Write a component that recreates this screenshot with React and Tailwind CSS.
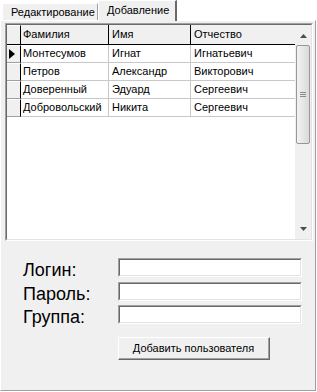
export default function App() {
  const rows = [
    ["Монтесумов", "Игнат", "Игнатьевич"],
    ["Петров", "Александр", "Викторович"],
    ["Доверенный", "Эдуард", "Сергеевич"],
    ["Добровольский", "Никита", "Сергеевич"],
  ];
  const fields = ["Логин:", "Пароль:", "Группа:"];
  return (
    <div className="w-[317px] h-[392px] bg-white font-['Liberation_Sans',Arial,sans-serif] text-[11px] text-black overflow-hidden">
      {/* tabs */}
      <div className="relative z-10 h-[20px] flex items-end pl-[2px]">
        <div className="h-[17px] w-[96px] bg-[#f0f0f0] border-t border-l border-white border-r border-r-[#a0a0a0] pl-[8px] leading-[16px] whitespace-nowrap">
          Редактирование
        </div>
        <div className="h-[21px] w-[79px] -mb-[1px] bg-[#f0f0f0] border-t border-l border-white border-r-2 border-r-[#696969] pl-[8px] leading-[19px] whitespace-nowrap">
          Добавление
        </div>
      </div>
      {/* panel */}
      <div className="h-[371px] w-[316px] bg-[#f0f0f0] border-t border-l border-white border-r border-b border-r-[#a0a0a0] border-b-[#a0a0a0] flex flex-col">
        {/* grid */}
        <div className="ml-[4px] mt-[2px] w-[308px] h-[218px] border-t border-l border-[#a0a0a0] border-r border-b border-r-white border-b-white">
          <div className="h-full w-full border-t border-l border-[#696969] border-r border-b border-r-[#e3e3e3] border-b-[#e3e3e3] bg-white flex">
            <div className="w-[288px] flex flex-col">
              {/* header */}
              <div className="flex h-[20px] border-b border-black">
                <div className="w-[14px] bg-[#f0f0f0] border-r border-black border-t border-t-white"></div>
                <div className="w-[88px] bg-[#f0f0f0] border-r border-black pl-[2px] leading-[19px]">Фамилия</div>
                <div className="w-[82px] bg-[#f0f0f0] border-r border-black pl-[3px] leading-[19px]">Имя</div>
                <div className="w-[104px] bg-[#f0f0f0] pl-[3px] leading-[19px]">Отчество</div>
              </div>
              {rows.map((r, i) => (
                <div key={i} className="flex h-[18px]">
                  <div className="w-[14px] bg-[#f0f0f0] border-r border-black border-b border-b-[#a0a0a0] border-t border-t-white flex items-center pl-[2px]">
                    {i === 0 && (
                      <svg width="6" height="10" viewBox="0 0 6 10">
                        <path d="M0 0 L6 5 L0 10 Z" fill="#000" />
                      </svg>
                    )}
                  </div>
                  <div className="w-[88px] border-r border-b border-[#c8c8c8] pl-[2px] leading-[17px] whitespace-nowrap">{r[0]}</div>
                  <div className="w-[82px] border-r border-b border-[#c8c8c8] pl-[3px] leading-[17px] whitespace-nowrap">{r[1]}</div>
                  <div className="w-[104px] border-b border-[#c8c8c8] pl-[3px] leading-[17px] whitespace-nowrap">{r[2]}</div>
                </div>
              ))}
            </div>
            {/* scrollbar */}
            <div className="w-[17px] bg-[#f0f0f0] flex flex-col">
              <div className="h-[20px] flex items-center justify-center pt-[2px]">
                <svg width="7" height="4" viewBox="0 0 7 4">
                  <path d="M3.5 0 L7 4 L0 4 Z" fill="#4d4d4d" />
                </svg>
              </div>
              <div className="mx-[1px] h-[99px] rounded-[2px] border border-[#979797] bg-gradient-to-r from-[#f3f3f3] to-[#dadada] flex items-center justify-center">
                <div className="flex flex-col gap-[1px]">
                  <div className="w-[6px] h-[1px] bg-[#8a8a8a]"></div>
                  <div className="w-[6px] h-[1px] bg-[#8a8a8a]"></div>
                  <div className="w-[6px] h-[1px] bg-[#8a8a8a]"></div>
                </div>
              </div>
              <div className="flex-1"></div>
              <div className="h-[20px] flex items-center justify-center pb-[1px]">
                <svg width="7" height="4" viewBox="0 0 7 4">
                  <path d="M0 0 L7 0 L3.5 4 Z" fill="#4d4d4d" />
                </svg>
              </div>
            </div>
          </div>
        </div>
        {/* form */}
        <div className="pl-[22px] mt-[17px] flex flex-col">
          {fields.map((f, i) => (
            <div key={f} className={`flex items-start h-[19px] ${i === 0 ? "" : i === 1 ? "mt-[5px]" : "mt-[4px]"}`}>
              <div className="w-[95px] h-[19px] text-[18px] leading-[25px] whitespace-nowrap">{f}</div>
              <div className="w-[184px] h-[19px] border-t border-l border-[#a0a0a0] border-r border-b border-r-white border-b-white">
                <div className="h-full w-full border-t border-l border-[#696969] border-r border-b border-r-[#e3e3e3] border-b-[#e3e3e3] bg-white"></div>
              </div>
            </div>
          ))}
          <div className="ml-[95px] mt-[13px] w-[152px] h-[23px] border-t border-l border-white border-r border-b border-r-[#696969] border-b-[#696969]">
            <div className="h-full w-full border-r border-b border-[#a0a0a0] bg-[#f0f0f0] flex items-center justify-center whitespace-nowrap">
              Добавить пользователя
            </div>
          </div>
        </div>
      </div>
    </div>
  );
}
